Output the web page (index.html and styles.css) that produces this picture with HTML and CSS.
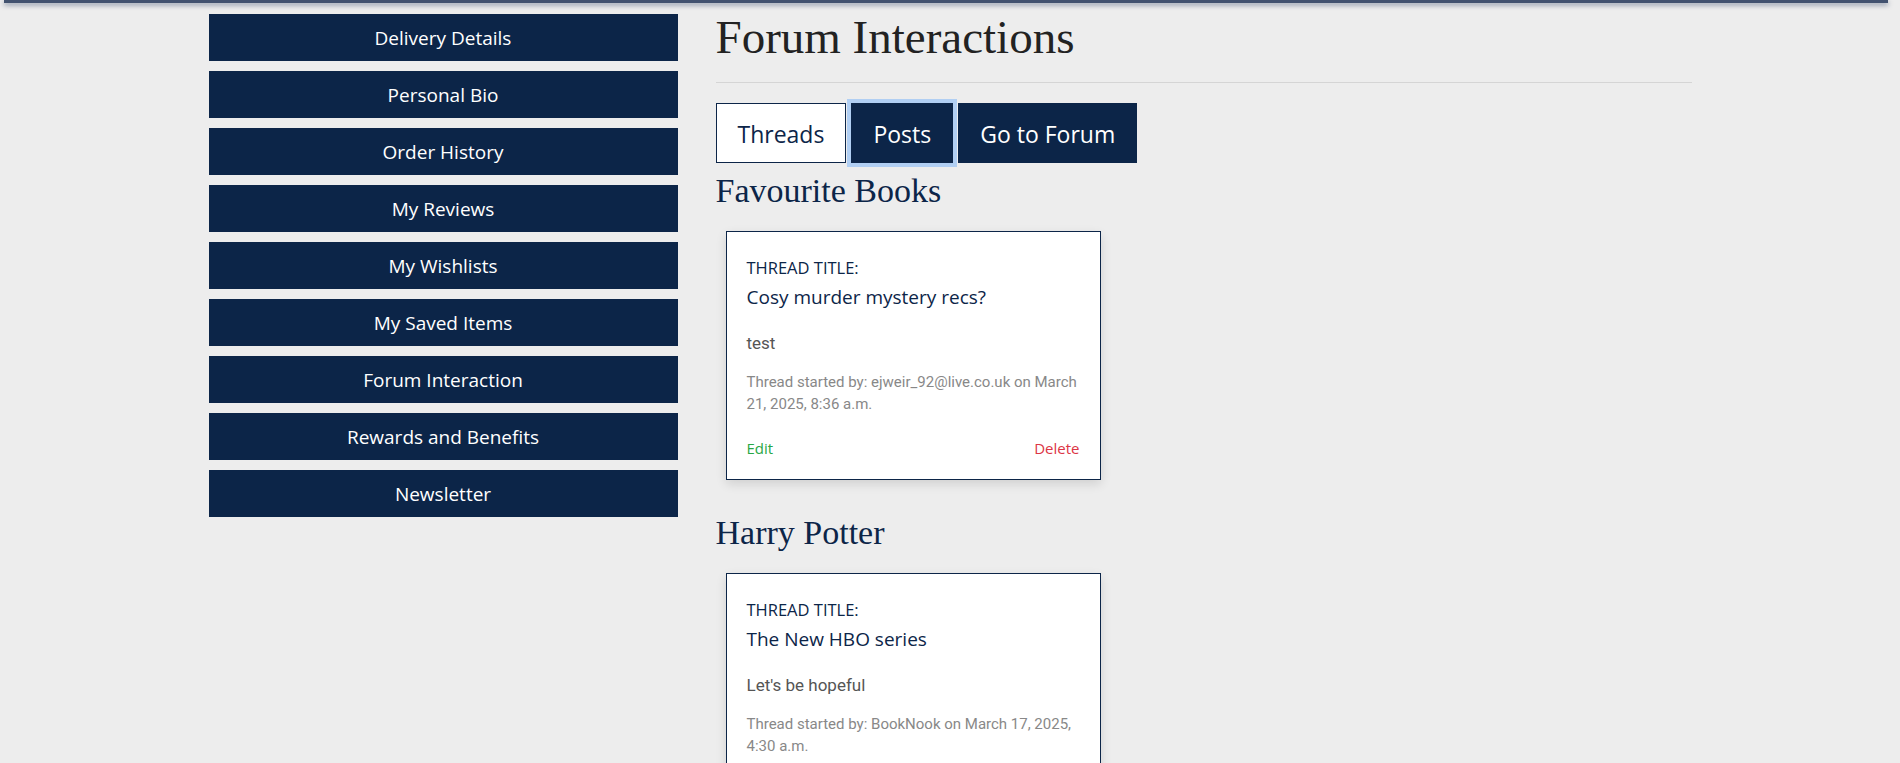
FILE: index.html
```html
<!DOCTYPE html>
<html lang="en">
<head>
<meta charset="utf-8">
<title>Forum Interactions</title>
<link rel="stylesheet" href="styles.css">
</head>
<body>
<div class="topbar"></div>
<div class="layout">
  <nav class="sidebar">
    <a class="side-btn" href="#">Delivery Details</a>
    <a class="side-btn" href="#">Personal Bio</a>
    <a class="side-btn" href="#">Order History</a>
    <a class="side-btn" href="#">My Reviews</a>
    <a class="side-btn" href="#">My Wishlists</a>
    <a class="side-btn" href="#">My Saved Items</a>
    <a class="side-btn" href="#">Forum Interaction</a>
    <a class="side-btn" href="#">Rewards and Benefits</a>
    <a class="side-btn" href="#">Newsletter</a>
  </nav>
  <main class="main">
    <h1 class="page-title">Forum Interactions</h1>
    <hr class="divider">
    <div class="tabs">
      <button class="tab tab-light">Threads</button>
      <button class="tab tab-dark tab-focus">Posts</button>
      <button class="tab tab-dark">Go to Forum</button>
    </div>

    <section class="forum-section">
      <h3 class="forum-name">Favourite Books</h3>
      <div class="card">
        <div class="card-label">THREAD TITLE:</div>
        <div class="card-title">Cosy murder mystery recs?</div>
        <p class="card-body">test</p>
        <p class="card-meta">Thread started by: ejweir_92@live.co.uk on March 21, 2025, 8:36 a.m.</p>
        <div class="card-actions">
          <a class="act-edit" href="#">Edit</a>
          <a class="act-delete" href="#">Delete</a>
        </div>
      </div>
    </section>

    <section class="forum-section">
      <h3 class="forum-name">Harry Potter</h3>
      <div class="card">
        <div class="card-label">THREAD TITLE:</div>
        <div class="card-title">The New HBO series</div>
        <p class="card-body">Let's be hopeful</p>
        <p class="card-meta">Thread started by: BookNook on March 17, 2025, 4:30 a.m.</p>
        <div class="card-actions">
          <a class="act-edit" href="#">Edit</a>
          <a class="act-delete" href="#">Delete</a>
        </div>
      </div>
    </section>
  </main>
</div>
</body>
</html>
```

FILE: styles.css
```css
* { box-sizing: border-box; }

html, body {
  margin: 0;
  padding: 0;
  background: #ededed;
}

body {
  font-family: "Open Sans", "Noto Sans", sans-serif;
  color: #222;
}

.topbar {
  height: 3px;
  margin: 0 12px 0 4px;
  background: #42526f;
  box-shadow: 0 2px 5px rgba(25, 45, 85, 0.55);
}

.layout {
  width: 1483px;
  margin: 0 auto;
  display: grid;
  grid-template-columns: 469px 976px;
  column-gap: 38px;
}

.sidebar {
  padding-top: 11px;
  display: flex;
  flex-direction: column;
  gap: 10px;
}

.side-btn {
  display: block;
  height: 47px;
  line-height: 47px;
  padding-top: 1px;
  background: #0c2548;
  color: #fff;
  text-align: center;
  text-decoration: none;
  font-size: 19px;
}

.main {
  padding-top: 6px;
}

.page-title {
  margin: 0;
  font-family: "Liberation Serif", serif;
  font-weight: 400;
  font-size: 47px;
  line-height: 56px;
  color: #222;
}

.divider {
  margin: 17px 0 20px;
  border: 0;
  border-top: 1px solid #d5d5d5;
  height: 0;
}

.tabs {
  display: flex;
  gap: 5px;
}

.tab {
  height: 60px;
  padding: 2px 21px 0;
  line-height: 57px;
  font-family: "Open Sans", "Noto Sans", sans-serif;
  font-size: 23px;
  border: 1px solid #0c2548;
  border-radius: 0;
  cursor: pointer;
}

.tab-light {
  background: #fff;
  color: #0c2548;
}

.tab-dark {
  background: #0c2548;
  color: #fff;
}

.tab-focus {
  box-shadow: 0 0 0 4px #b1cff3;
}

.forum-section {
  margin-bottom: 32px;
}

.forum-name {
  margin: 7px 0 20px;
  font-family: "Liberation Serif", serif;
  font-weight: 400;
  font-size: 34px;
  line-height: 41px;
  color: #0c2548;
}

.card {
  width: 375px;
  margin-left: 10px;
  padding: 24px 20px 20px;
  background: #fff;
  border: 1px solid #0c2548;
  box-shadow: 0 4px 10px rgba(0, 0, 0, 0.12);
}

.card-label {
  font-size: 16.5px;
  line-height: 24px;
  color: #0c2548;
  margin-bottom: 4px;
}

.card-title {
  font-size: 19px;
  line-height: 27px;
  color: #0c2548;
  margin-bottom: 20px;
}

.card-body {
  margin: 0 0 15px;
  font-family: Roboto, sans-serif;
  font-size: 17px;
  line-height: 25px;
  color: #555;
}

.card-meta {
  margin: 0 0 22px;
  font-family: Roboto, sans-serif;
  font-size: 15px;
  line-height: 22px;
  color: #888;
}

.card-actions {
  display: flex;
  justify-content: space-between;
  font-size: 15px;
  line-height: 22px;
}

.act-edit {
  color: #28a745;
  text-decoration: none;
}

.act-delete {
  color: #dc3545;
  text-decoration: none;
}
```
